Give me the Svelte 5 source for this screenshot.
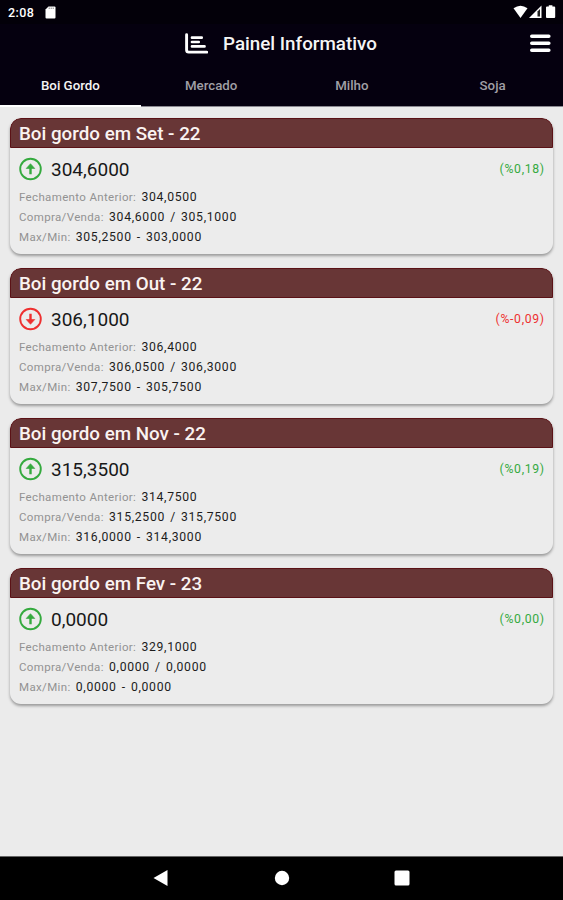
<script>
	let tabs = ['Boi Gordo', 'Mercado', 'Milho', 'Soja']
	let activeTab = 0

	const quotes = [
		{
			title: 'Boi gordo em Set - 22',
			value: '304,6000',
			change: '0,18',
			up: true,
			previous: '304,0500',
			trade: '304,6000 / 305,1000',
			range: '305,2500 - 303,0000'
		},
		{
			title: 'Boi gordo em Out - 22',
			value: '306,1000',
			change: '-0,09',
			up: false,
			previous: '306,4000',
			trade: '306,0500 / 306,3000',
			range: '307,7500 - 305,7500'
		},
		{
			title: 'Boi gordo em Nov - 22',
			value: '315,3500',
			change: '0,19',
			up: true,
			previous: '314,7500',
			trade: '315,2500 / 315,7500',
			range: '316,0000 - 314,3000'
		},
		{
			title: 'Boi gordo em Fev - 23',
			value: '0,0000',
			change: '0,00',
			up: true,
			previous: '329,1000',
			trade: '0,0000 / 0,0000',
			range: '0,0000 - 0,0000'
		}
	]
</script>

<div class="screen">
	<div class="status">
		<span class="time">2:08</span>
		<svg width="11" height="13" viewBox="0 0 11 13">
			<path d="M3.5 .5H9.5Q10.5 .5 10.5 1.5V11.5Q10.5 12.5 9.5 12.5H1.5Q.5 12.5 .5 11.5V3.5Z" fill="#fff" />
			<path d="M4.2 1.5v1.5M6.2 1.5v1.5M8.2 1.5v1.5" stroke="#777" stroke-width=".9" />
		</svg>
		<svg class="signals" width="44" height="14" viewBox="0 0 44 14">
			<path d="M.5 3.2Q7.5-1.8 14.5 3.2L7.5 13Z" fill="#fff" />
			<path d="M28.5.5V13H16Z" fill="#fff" />
			<path d="M24.5 6.5L27 4V11.5H24.5Z" fill="#222" />
			<path d="M35.8 .3h3.6v1.3h1.8q1 0 1 1v9.5q0 1-1 1h-7.2q-1 0-1-1V2.6q0-1 1-1H35.8Z" fill="#fff" />
		</svg>
	</div>

	<header>
		<div class="brand">
			<svg width="24" height="22" viewBox="0 0 24 22" fill="none" stroke="#fff" stroke-linecap="round">
				<path d="M2.6 1.7V17Q2.6 19.1 4.7 19.1H22.7" stroke-width="2.9" />
				<path d="M8 4.7H17.7M8 9H14.7M8 13.4H20.5" stroke-width="2.7" />
			</svg>
			<h1>Painel Informativo</h1>
		</div>
		<button class="menu" aria-label="Menu">
			<svg width="22" height="20" viewBox="0 0 22 20" stroke="#fff" stroke-width="3.6" stroke-linecap="round">
				<path d="M2.8 2.2H19.8M2.8 9.2H19.8M2.8 16.2H19.8" />
			</svg>
		</button>
	</header>

	<nav>
		{#each tabs as tab, i}
			<button class="tab {i === activeTab ? 'active' : ''}" on:click={() => (activeTab = i)}>
				{tab}
			</button>
		{/each}
	</nav>

	<main>
		{#each quotes as quote}
			<section class="card">
				<h2>{quote.title}</h2>
				<div class="body">
					<div class="current {quote.up ? 'up' : 'down'}">
						<svg width="24" height="24" viewBox="0 0 24 24" fill="none" stroke="currentColor">
							<circle cx="11.5" cy="12" r="10.3" stroke-width="1.9" />
							{#if quote.up}
								<path d="M11.5 17.3V9" stroke-width="2.4" />
								<path d="M11.5 6.7L15.8 11.5H7.2Z" fill="currentColor" stroke-width=".6" stroke-linejoin="round" />
							{:else}
								<path d="M11.5 6.7V15" stroke-width="2.4" />
								<path d="M11.5 17.3L15.8 12.5H7.2Z" fill="currentColor" stroke-width=".6" stroke-linejoin="round" />
							{/if}
						</svg>
						<span class="value">{quote.value}</span>
						<span class="change">(%{quote.change})</span>
					</div>
					<p>Fechamento Anterior: <span>{quote.previous}</span></p>
					<p>Compra/Venda: <span>{quote.trade}</span></p>
					<p>Max/Min: <span>{quote.range}</span></p>
				</div>
			</section>
		{/each}
	</main>

	<footer>
		<svg width="16" height="18" viewBox="0 0 16 18"><path d="M.5 9L14.5 1V17Z" fill="#fff" /></svg>
		<svg width="16" height="16" viewBox="0 0 16 16"><circle cx="8" cy="8" r="7.2" fill="#fff" /></svg>
		<svg width="16" height="16" viewBox="0 0 16 16"><rect x=".5" y=".5" width="15" height="15" rx="1.5" fill="#fff" /></svg>
	</footer>
</div>

<style>
	:global(body) {
		margin: 0;
	}

	.screen {
		height: 900px;
		display: flex;
		flex-direction: column;
		background: #ebebeb;
		font-family: Roboto, sans-serif;
		overflow: hidden;
	}

	button {
		padding: 0;
		border: none;
		background: none;
		font-family: inherit;
		cursor: pointer;
	}

	.status {
		height: 24px;
		box-sizing: border-box;
		padding: 0 6px 0 8px;
		display: flex;
		align-items: center;
		background: #030009;
		color: #fff;
	}

	.time {
		width: 37px;
		font-size: 12.5px;
		font-weight: 500;
		letter-spacing: 0.4px;
		line-height: 24px;
		padding-top: 1px;
	}

	.signals {
		margin-left: auto;
	}

	header {
		height: 40px;
		padding: 0 12px 0 184px;
		display: flex;
		align-items: center;
		justify-content: space-between;
		background: #05000f;
	}

	.brand {
		display: flex;
		align-items: center;
		gap: 15px;
	}

	h1 {
		margin: 0;
		color: #f5f5f5;
		font-size: 18.8px;
		font-weight: 500;
		line-height: 40px;
	}

	.menu,
	.menu svg {
		display: block;
	}

	nav {
		height: 43px;
		flex-shrink: 0;
		display: flex;
		background: #05000f;
		border-bottom: 1px solid #8b8991;
		box-sizing: border-box;
	}

	.tab {
		flex: 1;
		height: 43px;
		box-sizing: border-box;
		padding-top: 1px;
		border-bottom: 2px solid transparent;
		color: #a09fa5;
		font-size: 13.3px;
		font-weight: 500;
	}

	.tab.active {
		color: #f4f4f4;
		border-bottom-color: #fff;
	}

	main {
		flex: 1;
		padding: 11px 10px 0;
		display: flex;
		flex-direction: column;
		gap: 14px;
	}

	.card {
		height: 136px;
		border-radius: 11px;
		overflow: hidden;
		background: #ececec;
		box-shadow: 0 2px 3px rgba(0, 0, 0, 0.35);
	}

	h2 {
		height: 30px;
		box-sizing: border-box;
		margin: 0;
		padding-left: 8px;
		border: 1px solid #5b1216;
		border-radius: 11px 11px 0 0;
		background: #683636;
		color: #faf3f1;
		font-size: 18.8px;
		font-weight: 500;
		line-height: 30px;
	}

	.body {
		padding: 9px 9px 0;
	}

	.current {
		height: 24px;
		margin-bottom: 6.4px;
		display: flex;
		align-items: center;
	}

	.up {
		color: #35aa3f;
	}

	.down {
		color: #ee3030;
	}

	.value {
		margin-left: 8px;
		color: #181818;
		font-size: 19px;
	}

	.change {
		margin-left: auto;
		margin-right: -0.8px;
		font-size: 12.2px;
		letter-spacing: 0.7px;
	}

	p {
		height: 19.8px;
		margin: 0;
		color: #929292;
		font-size: 11.5px;
		letter-spacing: 0.35px;
		line-height: 20px;
		white-space: nowrap;
	}

	p span {
		margin-left: 2px;
		color: #1c1c1c;
		font-size: 12.2px;
		letter-spacing: 0.7px;
		word-spacing: 1.4px;
	}

	footer {
		height: 44px;
		box-sizing: border-box;
		padding: 0 153px 2px;
		display: flex;
		align-items: center;
		justify-content: space-between;
		background: #000;
		border-top: 1px solid #666;
	}
</style>
